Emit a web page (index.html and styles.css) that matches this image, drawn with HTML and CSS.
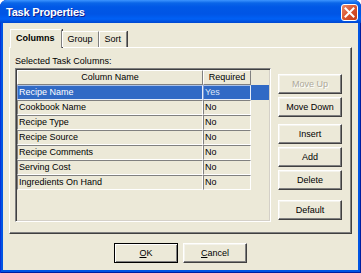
FILE: index.html
```html
<!DOCTYPE html>
<html lang="en">
<head>
    <meta charset="UTF-8">
    <title>Task Properties</title>
    <link rel="stylesheet" href="styles.css">
</head>
<body>
    <div class="window">
        <div class="titlebar">
            <span class="title">Task Properties</span>
            <span class="close-btn">
                <svg width="11" height="11" viewBox="0 0 11 11">
                    <path d="M1.5 1.5 L9.5 9.5 M9.5 1.5 L1.5 9.5" stroke="#fff" stroke-width="2" stroke-linecap="square"/>
                </svg>
            </span>
        </div>

        <div class="client">
            <div class="tabs">
                <div class="tab active">Columns</div>
                <div class="tab">Group</div>
                <div class="tab">Sort</div>
            </div>

            <div class="panel">
                <div class="panel-label">Selected Task Columns:</div>
                <div class="panel-body">
                    <div class="grid">
                        <div class="grid-head">
                            <div class="hcell col-name">Column Name</div>
                            <div class="hcell col-req">Required</div>
                        </div>
                        <div class="grid-row selected">
                            <div class="cell col-name">Recipe Name</div>
                            <div class="cell col-req focus">Yes</div>
                        </div>
                        <div class="grid-row">
                            <div class="cell col-name">Cookbook Name</div>
                            <div class="cell col-req">No</div>
                        </div>
                        <div class="grid-row">
                            <div class="cell col-name">Recipe Type</div>
                            <div class="cell col-req">No</div>
                        </div>
                        <div class="grid-row">
                            <div class="cell col-name">Recipe Source</div>
                            <div class="cell col-req">No</div>
                        </div>
                        <div class="grid-row">
                            <div class="cell col-name">Recipe Comments</div>
                            <div class="cell col-req">No</div>
                        </div>
                        <div class="grid-row">
                            <div class="cell col-name">Serving Cost</div>
                            <div class="cell col-req">No</div>
                        </div>
                        <div class="grid-row">
                            <div class="cell col-name">Ingredients On Hand</div>
                            <div class="cell col-req">No</div>
                        </div>
                    </div>

                    <div class="side-buttons">
                        <button class="btn btn-up" disabled>Move Up</button>
                        <button class="btn btn-down">Move Down</button>
                        <button class="btn btn-insert">Insert</button>
                        <button class="btn btn-add">Add</button>
                        <button class="btn btn-delete">Delete</button>
                        <button class="btn btn-default">Default</button>
                    </div>
                </div>
            </div>

            <div class="footer">
                <button class="btn btn-ok"><u>O</u>K</button>
                <button class="btn"><u>C</u>ancel</button>
            </div>
        </div>
    </div>
</body>
</html>
```

FILE: styles.css
```css
* { margin: 0; padding: 0; box-sizing: border-box; }
:root {
    --face: #ECE9D8; --shadow: #808080; --dark: #404040;
    --light: #ffffff; --select: #316AC5; --disabled: #ACA899;
}
body {
    font-family: "Liberation Sans", Arial, sans-serif; font-size: 9px;
    color: #000; background: #fff; width: 361px; height: 273px; overflow: hidden;
}
.window {
    width: 361px; height: 273px; display: flex; flex-direction: column;
    background: #0054E3; border-radius: 7px 7px 0 0; overflow: hidden;
    box-shadow: inset 1px 0 #0831D9, inset -1px 0 #001EA0, inset 0 -1px #001EA0;
}
.titlebar {
    height: 23px; display: flex; align-items: center; justify-content: space-between;
    padding: 0 3px 0 6px;
    background: linear-gradient(#3D95FF 0, #0A66E8 3px, #0058E6 7px, #0055E5 14px, #0060F5 19px, #0047D0 23px);
}
.title {
    color: #fff; font-weight: bold; font-size: 11px; letter-spacing: -0.2px;
    text-shadow: 1px 1px #0F1E8C;
}
.close-btn {
    width: 17px; height: 17px; margin-top: 2px; border: 1px solid #fff; border-radius: 3px;
    background: linear-gradient(135deg, #EA8A6B, #D9542F 50%, #C43D17);
    display: flex; align-items: center; justify-content: center;
}
.client {
    flex: 1; margin: 0 3px 3px; background: var(--face);
    display: flex; flex-direction: column;
}

/* tabs */
.tabs {
    display: flex; align-items: flex-end; height: 19px;
    margin: 6px 0 -1px 7px; position: relative; z-index: 1;
}
.tab {
    height: 16px; margin-bottom: 1px; padding: 0 5px; line-height: 15px;
    background: var(--face); border: 1px solid; border-bottom: none;
    border-color: var(--light) var(--shadow) transparent var(--light);
    box-shadow: 1px 0 var(--dark);
}
.tab.active { height: 19px; margin-bottom: 0; font-weight: bold; padding: 0 6px 0 5px; line-height: 16px; }

.panel {
    margin-left: 6px; width: 343px; height: 187px; padding: 8px 0 0 5px;
    border: 1px solid; border-color: var(--light) var(--dark) var(--dark) var(--light);
    box-shadow: inset -1px -1px var(--shadow);
}
.panel-label { line-height: 11px; margin-bottom: 1px; }
.panel-body { display: flex; gap: 7px; }

/* grid */
.grid {
    width: 256px; height: 154px; padding: 1px;
    border: 1px solid; border-color: var(--shadow) var(--light) var(--light) var(--shadow);
    box-shadow: inset 1px 1px var(--dark), inset -1px -1px #D4D0C8;
}
.grid-head, .grid-row { display: flex; height: 15px; }
.col-name { width: 186px; }
.col-req { width: 48px; }
.hcell {
    text-align: center; line-height: 13px;
    border: 1px solid; border-color: var(--light) var(--shadow) var(--shadow) var(--light);
}
.cell {
    line-height: 13px; padding-left: 1px; white-space: nowrap;
    border: 1px solid; border-color: var(--shadow) var(--light) var(--light) var(--shadow);
}
.grid-row.selected { background: var(--select); color: #fff; }
.grid-row.selected .cell { border-color: #A9C1E8 #E8EEF8 #E8EEF8 #7D9CD6; }
.cell.focus { border-color: #F2F2F2; color: #DCE6F6; }

/* buttons */
.side-buttons { display: flex; flex-direction: column; width: 64px; padding-top: 6px; }
.btn {
    width: 64px; height: 20px; font-family: inherit; font-size: 9px; color: #000;
    background: var(--face); border: 1px solid;
    border-color: var(--light) var(--dark) var(--dark) var(--light);
    box-shadow: inset -1px -1px var(--shadow), inset 1px 1px #F4F3EC;
}
.btn:disabled { color: var(--disabled); text-shadow: 1px 1px #fff; }
.btn-down, .btn-add, .btn-delete { margin-top: 3px; }
.btn-insert { margin-top: 7px; }
.btn-default { margin-top: 10px; }

.footer { display: flex; justify-content: center; gap: 5px; margin-top: 9px; }
.footer .btn { width: 64px; }
.btn-ok { border-color: #000; box-shadow: inset 1px 1px var(--light), inset -1px -1px var(--shadow); }
```
